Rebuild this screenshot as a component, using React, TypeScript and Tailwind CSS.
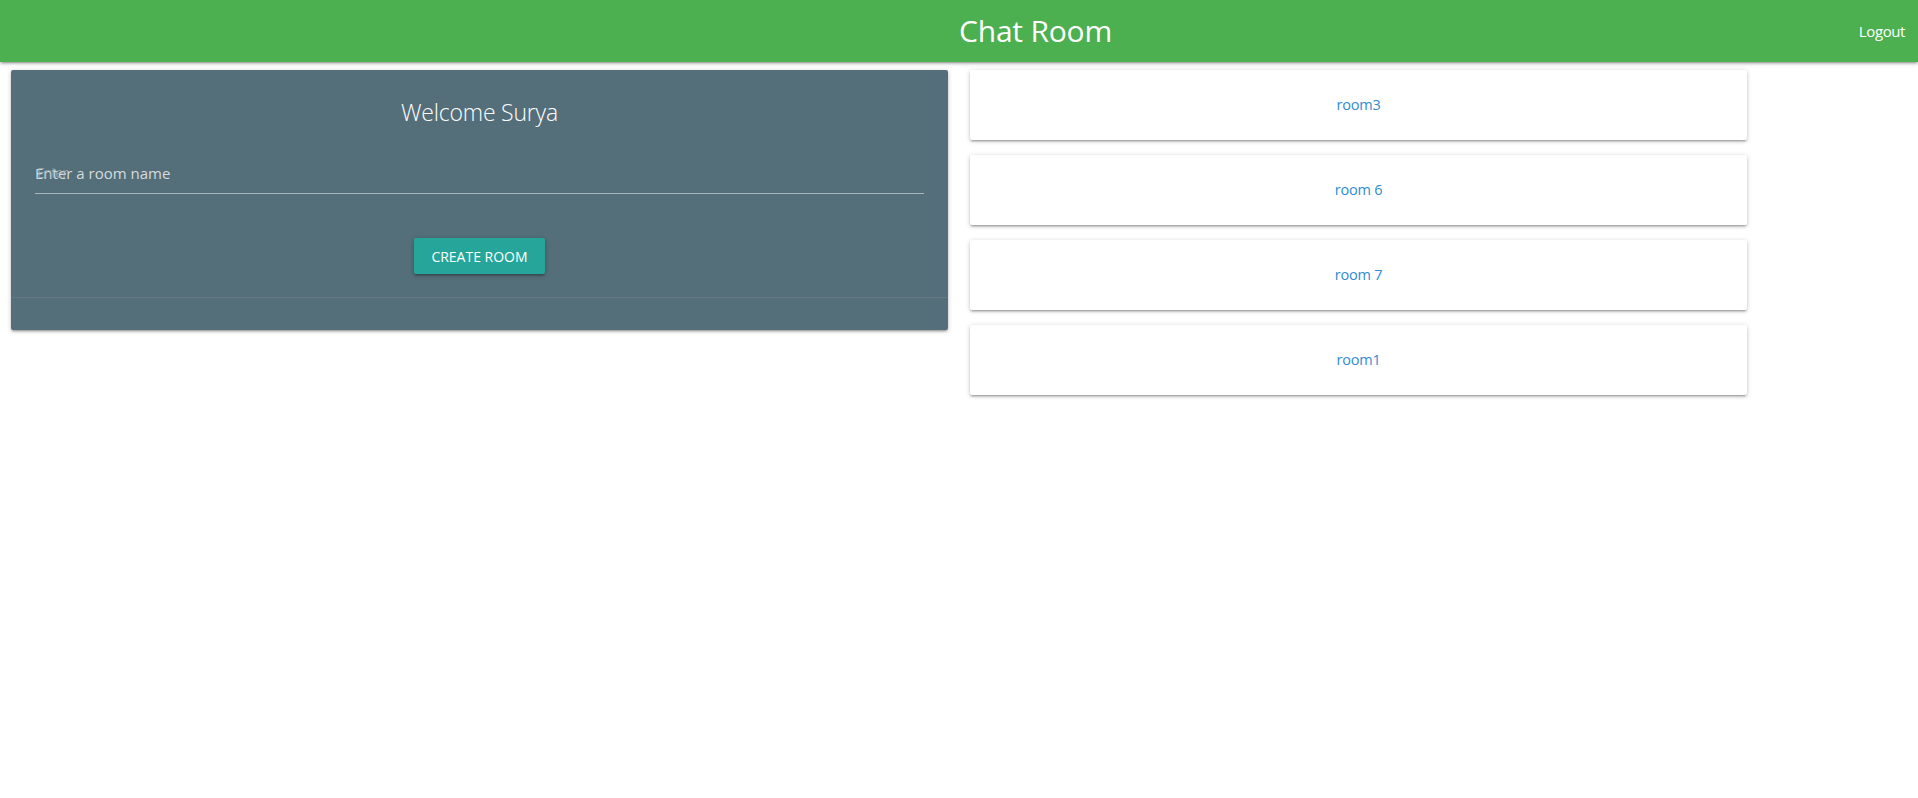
import { useState } from 'react';

const rooms = ['room3', 'room 6', 'room 7', 'room1'];

const shadow =
  'shadow-[0_2px_2px_0_rgba(0,0,0,0.14),0_3px_1px_-2px_rgba(0,0,0,0.12),0_1px_5px_0_rgba(0,0,0,0.2)]';

export default function App() {
  const [roomName, setRoomName] = useState('');

  return (
    <div className="min-h-screen bg-white font-['Open_Sans','Liberation_Sans',sans-serif]">
      <nav className={`relative z-10 grid h-[62px] grid-cols-2 bg-[#4caf50] text-white ${shadow}`}>
        <div />
        <div className="flex items-center justify-between">
          <span className="text-[30px] leading-none tracking-[-0.2px]">Chat Room</span>
          <a href="#" className="pr-[13px] text-[15px] tracking-[-0.4px]">
            Logout
          </a>
        </div>
      </nav>

      <div className="flex">
        <div className="w-1/2 px-[11px]">
          <div className={`mt-[8px] rounded-[2px] bg-[#546e7a] ${shadow}`}>
            <div className="px-[24px] pt-[24px] pb-[23px]">
              <h2 className="h-[36px] text-center text-[23px] leading-[36px] font-light tracking-[-0.2px] text-white">
                Welcome Surya
              </h2>
              <div className="relative mt-[22px] border-b border-[#a7b6bc]">
                <input
                  value={roomName}
                  onChange={(e) => setRoomName(e.target.value)}
                  placeholder="Enter a room name"
                  className="h-[41px] w-full bg-transparent text-[15px] tracking-[0px] text-white outline-none placeholder:text-[#d5dcdf]"
                />
                <label className="pointer-events-none absolute top-[10px] left-[2px] text-[14px] tracking-[-1px] text-[#aab6bb] opacity-70">
                  Enter
                </label>
              </div>
              <div className="mt-[44px] flex justify-center">
                <button
                  className={`h-[36px] w-[131px] rounded-[2px] bg-[#26a69a] text-[14px] tracking-[0px] text-white uppercase ${shadow}`}
                >
                  Create Room
                </button>
              </div>
            </div>
            <div className="h-[33px] border-t border-[rgba(160,160,160,0.2)]" />
          </div>
        </div>

        <div className="w-5/12 px-[11px]">
          <div className="mt-[8px] flex flex-col gap-[15px]">
            {rooms.map((room) => (
              <div
                key={room}
                className={`flex h-[70px] items-center justify-center rounded-[2px] bg-white ${shadow}`}
              >
                <a href="#" className="text-[14.5px] tracking-[-0.2px] text-[#2f8bd3]">
                  {room}
                </a>
              </div>
            ))}
          </div>
        </div>
      </div>
    </div>
  );
}
